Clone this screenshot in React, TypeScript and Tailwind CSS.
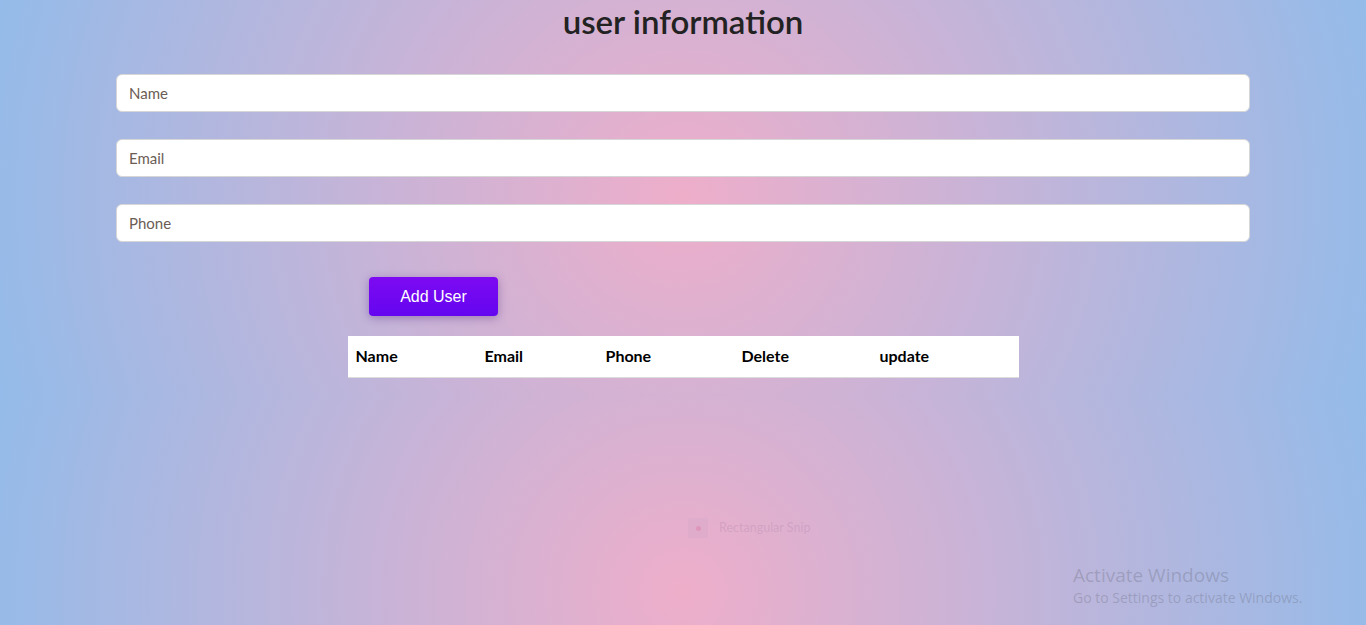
import React from "react";

const columns = [
  { label: "Name", w: "w-[129px]" },
  { label: "Email", w: "w-[121px]" },
  { label: "Phone", w: "w-[136px]" },
  { label: "Delete", w: "w-[138px]" },
  { label: "update", w: "w-[147px]" },
];

export default function App() {
  return (
    <div className="relative h-[625px] overflow-hidden bg-[radial-gradient(circle,#eeaeca_0%,#94bbe9_100%)] bg-size-[100%_395px] font-['Lato','Open_Sans',sans-serif]">
      <h1 className="pt-[2px] text-center text-[33px] font-semibold leading-[38px] text-[#222]">
        user information
      </h1>

      <div className="mt-[34px] flex flex-col gap-[27px] px-[116px]">
        {["Name", "Email", "Phone"].map((p) => (
          <input
            key={p}
            placeholder={p}
            className="h-[38px] w-full rounded-[6px] border border-[#d6d6d6] bg-white px-3 text-[15px] text-[#333] outline-none placeholder:text-[#6b5d55]"
          />
        ))}
      </div>

      <div className="mt-[35px] pl-[369px]">
        <button className="h-[39px] w-[129px] rounded-[4px] bg-[linear-gradient(180deg,#7d0af2,#6406f0)] font-['Liberation_Sans',Arial,sans-serif] text-[16px] text-white shadow-[0_2px_10px_rgba(60,20,120,0.35)]">
          Add User
        </button>
      </div>

      <div className="mt-[20px] flex justify-center">
        <table className="w-[671px] border-collapse bg-white">
          <thead>
            <tr className="h-[41px] border-b border-[#dcdcdc]">
              {columns.map((c) => (
                <th
                  key={c.label}
                  className={`${c.w} px-2 text-left text-[16px] font-bold text-black`}
                >
                  {c.label}
                </th>
              ))}
            </tr>
          </thead>
        </table>
      </div>

      <div className="absolute left-[688px] top-[518px] flex items-center gap-[11px] text-[12.5px] text-[rgba(160,120,160,0.25)]">
        <span className="flex h-[20px] w-[20px] items-center justify-center bg-[rgba(200,160,200,0.2)]">
          <span className="h-[5px] w-[5px] rounded-full bg-[rgba(220,120,160,0.4)]" />
        </span>
        <span>Rectangular Snip</span>
      </div>

      <div className="absolute left-[1073px] top-[563px] font-['Open_Sans',sans-serif] text-[rgba(110,110,130,0.35)]">
        <div className="text-[19px] leading-[24px]">Activate Windows</div>
        <div className="text-[14px] leading-[22px]">Go to Settings to activate Windows.</div>
      </div>
    </div>
  );
}
